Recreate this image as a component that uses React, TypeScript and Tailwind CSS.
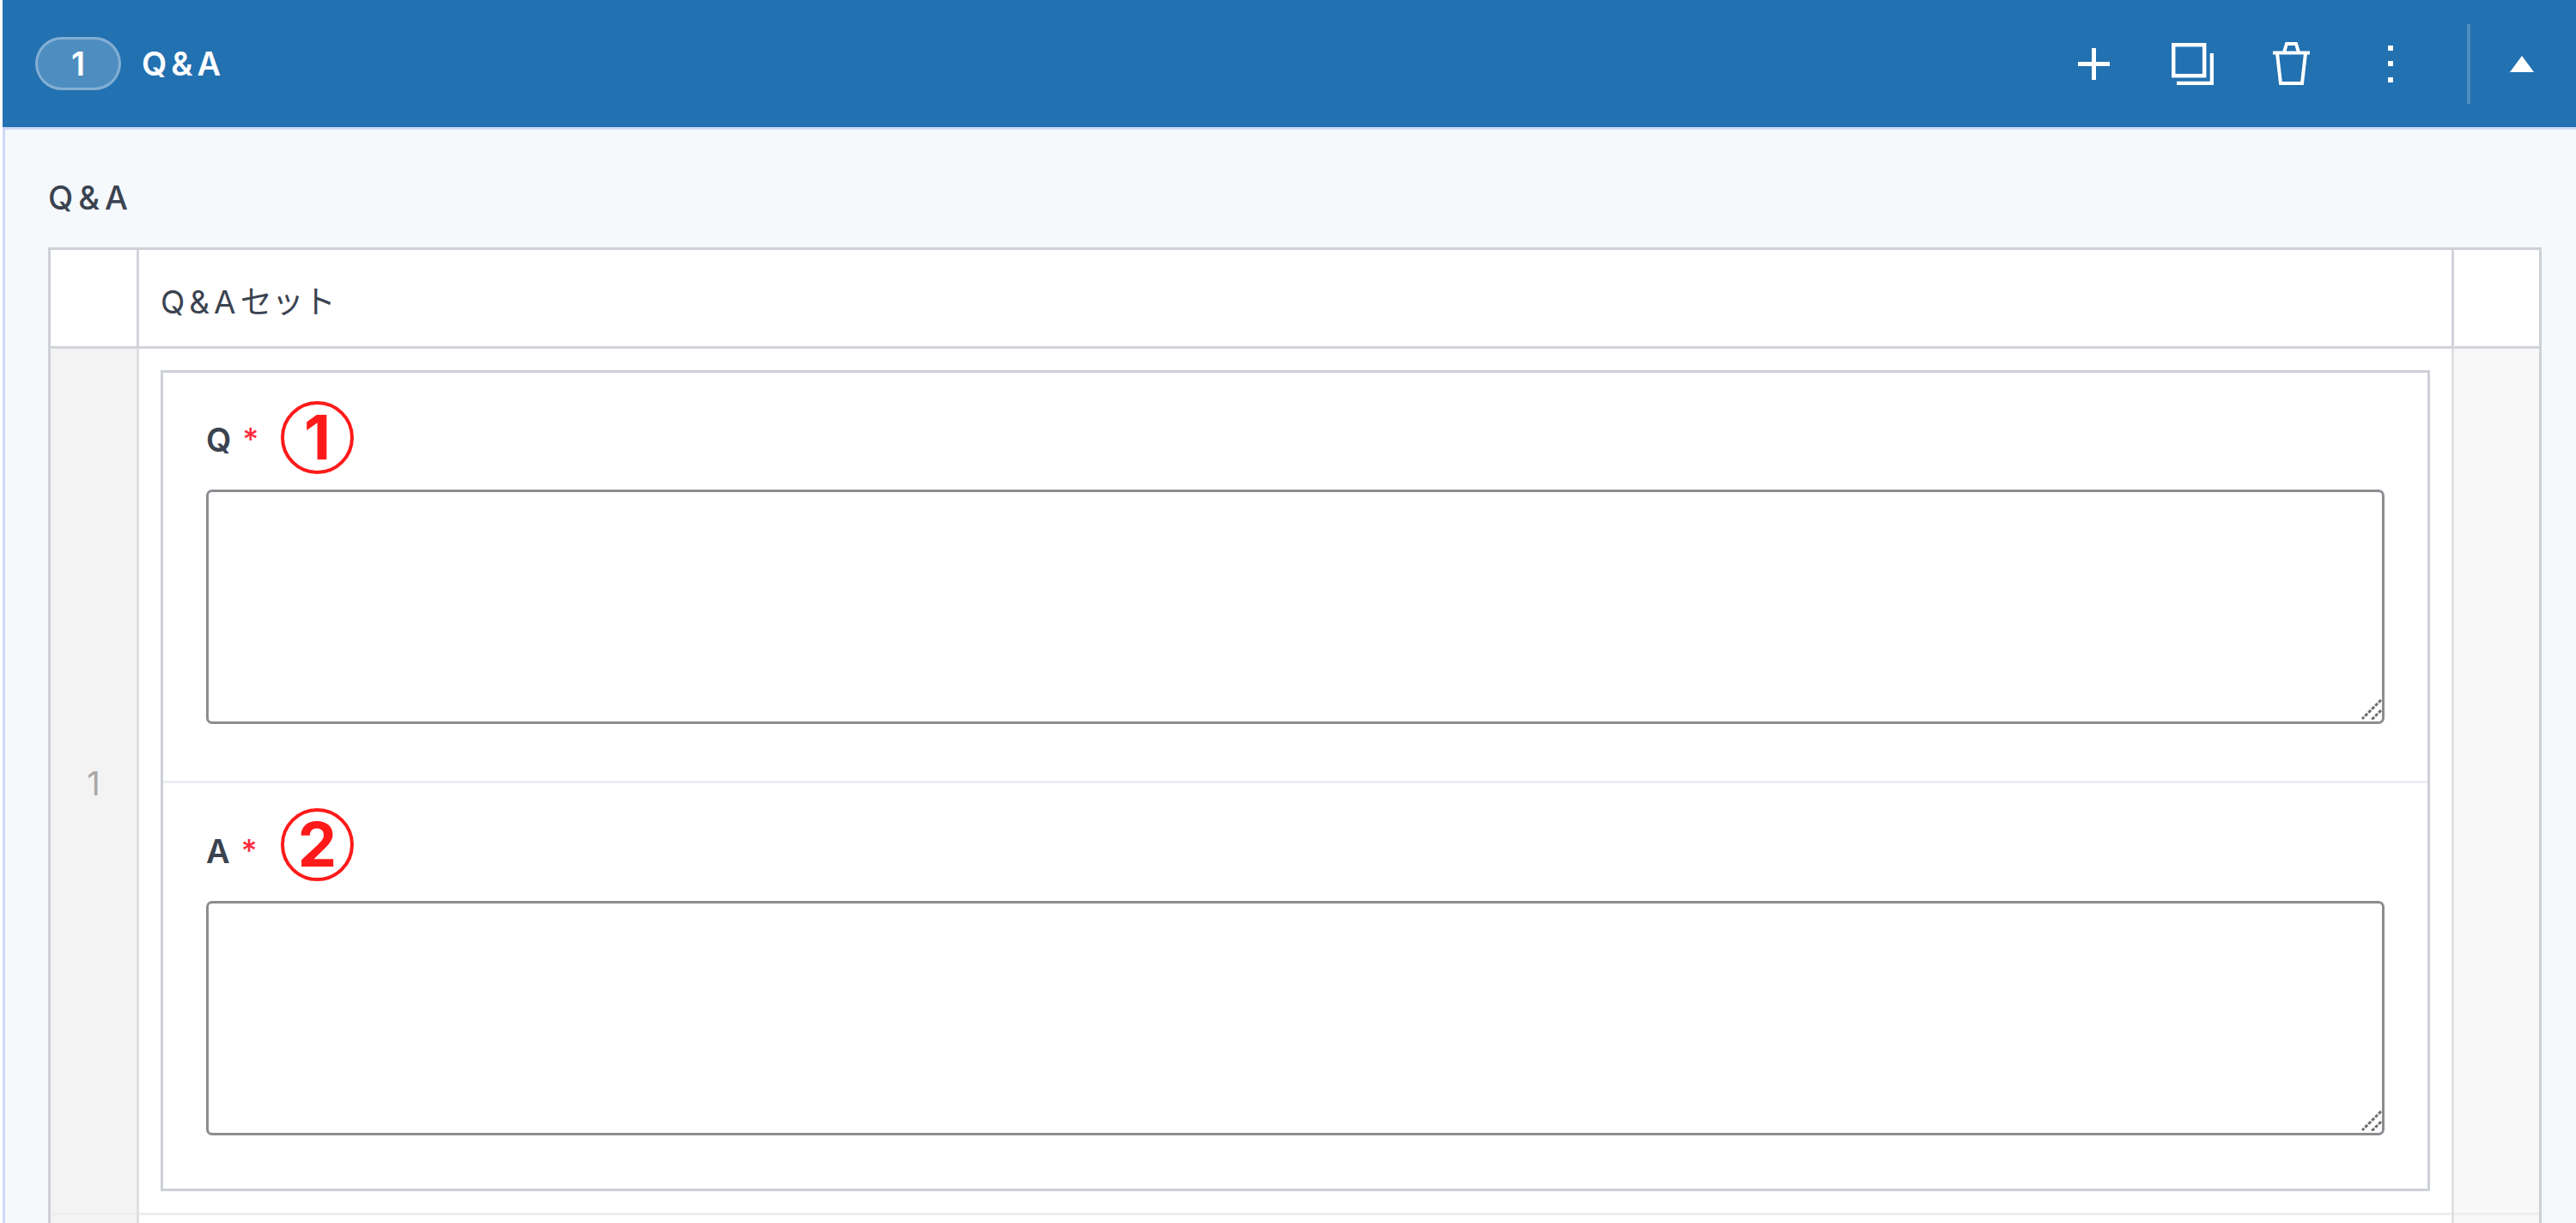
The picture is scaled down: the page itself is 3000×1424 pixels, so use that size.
const font = "font-['Inter','Noto_Sans_CJK_JP',sans-serif]";

function ResizeGrip() {
  return (
    <svg className="pointer-events-none absolute bottom-[5px] right-[3px]" width="24" height="24" viewBox="0 0 24 24" aria-hidden>
      <path d="M23 1 L1 23" stroke="#6e6e6e" strokeWidth="3" strokeDasharray="4 1.6" fill="none" />
      <path d="M23 13 L12 24" stroke="#6e6e6e" strokeWidth="3" strokeDasharray="4 1.6" fill="none" />
    </svg>
  );
}

function Field({ label, mark, className, labelClass, gapClass }: { label: string; mark: string; className: string; labelClass: string; gapClass: string }) {
  return (
    <div className={className}>
      <div className="flex h-[86px] items-center">
        <span className={`flex w-[87px] items-start leading-none ${labelClass}`}>
          <span className="text-[38px] leading-none font-semibold text-[#3a4350]">{label}</span>
          <span className="ml-[13px] text-[36px] leading-none font-medium text-[#ff2a3c]">*</span>
        </span>
        {/* red annotation put on top of the screenshot */}
        <span className="flex h-[85px] w-[85px] items-center justify-center rounded-full border-[4px] border-[#ff1a1a] text-[72px] leading-none font-bold text-[#ff1a1a]">
          {mark}
        </span>
      </div>
      <div className={`relative ${gapClass}`}>
        <textarea className="block h-[273px] w-full resize-none rounded-[7px] border-[3px] border-[#8b8d91] bg-white" />
        <ResizeGrip />
      </div>
    </div>
  );
}

export default function App() {
  return (
    <div className={`${font} h-[1424px] w-[3000px] overflow-hidden bg-white pl-[3px]`}>
      <header className="flex h-[148px] items-center justify-between bg-[#2271b1] text-white">
        <div className="flex items-center">
          <span className="ml-[38px] flex h-[62px] w-[100px] items-center justify-center rounded-full border-[3px] border-white/30 bg-white/20 text-[38px] leading-none font-semibold">
            1
          </span>
          <span className="ml-[24px] text-[38px] leading-none font-semibold tracking-[5px]">Q&amp;A</span>
        </div>
        <div className="flex items-center pr-[49px]">
          <button className="flex w-[115px] justify-center">
            <svg width="37" height="37" viewBox="0 0 37 37" fill="none" stroke="#fff" strokeWidth="5">
              <path d="M18.5 0V37M0 18.5H37" />
            </svg>
          </button>
          <button className="flex w-[115px] justify-center">
            <svg width="49" height="49" viewBox="0 0 49 49" fill="none" stroke="#fff" strokeWidth="4.5">
              <rect x="2.2" y="2.2" width="36" height="36" />
              <path d="M47 12V47H6" />
            </svg>
          </button>
          <button className="flex w-[115px] justify-center">
            <svg width="43" height="50" viewBox="0 0 43 50" fill="none" stroke="#fff" strokeWidth="4">
              <path d="M0 12.5H43M13 12L16 2H27L30 12M5 13L9 48H34L38 13" />
            </svg>
          </button>
          <button className="flex w-[115px] justify-center">
            <svg width="6" height="43" viewBox="0 0 6 43" fill="#fff">
              <rect width="6" height="6" />
              <rect y="18" width="6" height="6" />
              <rect y="37" width="6" height="6" />
            </svg>
          </button>
          <span className="ml-[32px] h-[93px] w-[4px] bg-white/20" />
          <button className="ml-[46px] flex">
            <svg width="28" height="19" viewBox="0 0 28 19" fill="#fff">
              <path d="M14 0L28 19H0Z" />
            </svg>
          </button>
        </div>
      </header>

      <main className="h-[1276px] border-t-[3px] border-l-[3px] border-[#d0d8f8] bg-[#f5f9fc] pt-[59px] pl-[50px]">
        <h2 className="h-[78px] text-[38px] leading-[41px] font-medium tracking-[6px] text-[#3a4350]">Q&amp;A</h2>

        <div className="h-[1200px] w-[2904px] border-x-[3px] border-t-[3px] border-[#cdd0d6] bg-white">
          <div className="flex h-[115px] border-b-[3px] border-[#d2d4da]">
            <div className="w-[100px] border-r-[3px] border-[#d2d4da] box-content" />
            <div className="flex flex-1 items-center pt-[9px] pl-[25px] text-[37px] text-[#3a4350]">
              <span className="tracking-[5px]">Q&amp;A</span>セット
            </div>
            <div className="w-[99px] border-l-[3px] border-[#d2d4da] box-content" />
          </div>

          <div className="flex h-[1200px]">
            <div className="w-[100px] box-content border-r-[3px] border-[#e0e0e0] bg-[#f3f3f3]">
              <div className="flex h-[1009px] items-center justify-center border-b-[3px] border-[#eeeeee] pt-[6px] text-[38px] text-[#a8a8a8]">1</div>
            </div>
            <div className="flex-1">
              <div className="h-[1009px] border-b-[3px] border-[#eeeeee] px-[25px] pt-[25px]">
                <div className="h-[956px] border-[3px] border-[#cdd0d6]">
                  <Field label="Q" mark="1" className="h-[478px] border-b-[3px] border-[#ecedf2] px-[50px] pt-[32px]" labelClass="translate-y-[3px]" gapClass="mt-[18px]" />
                  <Field label="A" mark="2" className="px-[50px] pt-[28px]" labelClass="translate-y-[8px]" gapClass="mt-[23px]" />
                </div>
              </div>
            </div>
            <div className="w-[99px] box-content border-l-[3px] border-[#e0e0e0] bg-[#f8f8f8]">
              <div className="h-[1009px] border-b-[3px] border-[#eeeeee]" />
            </div>
          </div>
        </div>
      </main>
    </div>
  );
}
